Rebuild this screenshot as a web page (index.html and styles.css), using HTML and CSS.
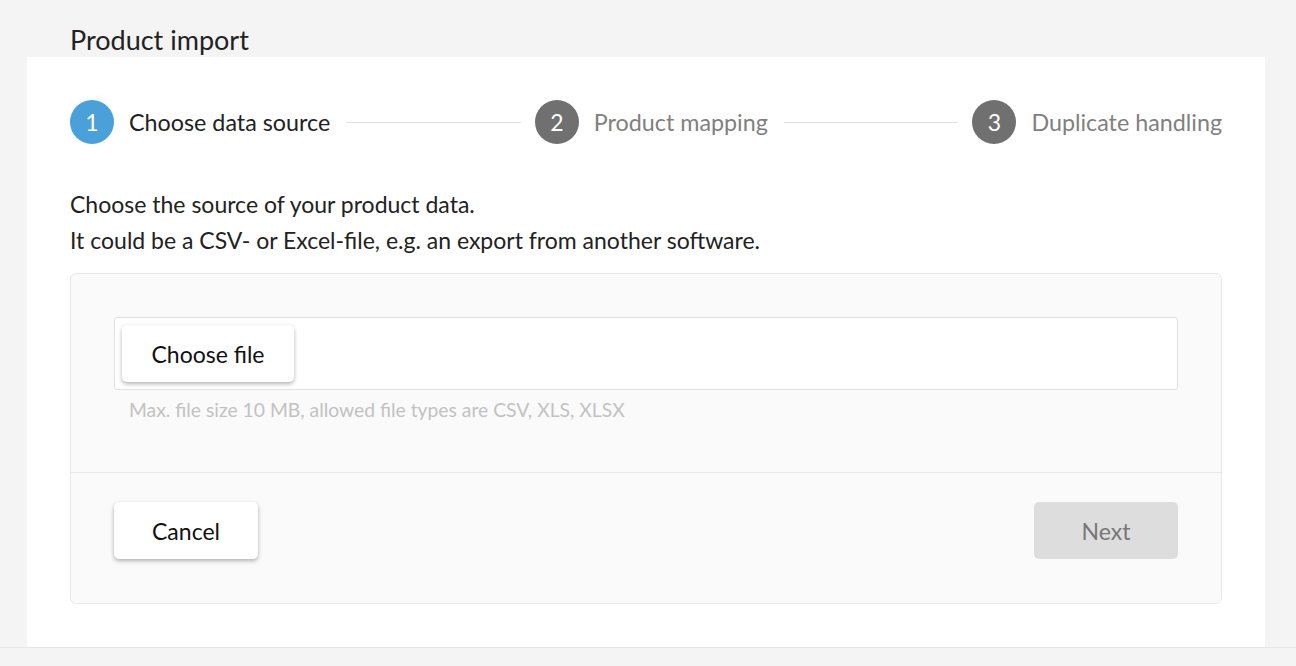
FILE: index.html
```html
<!DOCTYPE html>
<html lang="en">
<head>
<meta charset="utf-8">
<title>Product import</title>
<link rel="stylesheet" href="styles.css">
</head>
<body>
<div class="page">
  <h1 class="page-title">Product import</h1>
  <main class="panel">
    <div class="stepper">
      <div class="step active">
        <span class="step-num">1</span>
        <span class="step-label">Choose data source</span>
      </div>
      <div class="step-line"></div>
      <div class="step">
        <span class="step-num">2</span>
        <span class="step-label">Product mapping</span>
      </div>
      <div class="step-line"></div>
      <div class="step">
        <span class="step-num">3</span>
        <span class="step-label">Duplicate handling</span>
      </div>
    </div>
    <p class="intro">Choose the source of your product data.<br>It could be a CSV- or Excel-file, e.g. an export from another software.</p>
    <section class="box">
      <div class="box-body">
        <div class="file-input">
          <button class="btn" type="button">Choose file</button>
        </div>
        <div class="hint">Max. file size 10 MB, allowed file types are CSV, XLS, XLSX</div>
      </div>
      <div class="box-footer">
        <button class="btn btn-cancel" type="button">Cancel</button>
        <button class="btn btn-next" type="button" disabled>Next</button>
      </div>
    </section>
  </main>
  <div class="page-bottom"></div>
</div>
</body>
</html>
```
FILE: styles.css
```css
* { box-sizing: border-box; }
html, body {
  margin: 0;
  padding: 0;
  background: #f4f4f4;
  font-family: Lato, "Open Sans", "Liberation Sans", sans-serif;
  color: #222;
}
.page {
  width: 1296px;
  height: 666px;
  overflow: hidden;
}
.page-title {
  margin: 0;
  height: 57px;
  padding: 24px 0 0 70px;
  font-size: 27px;
  line-height: 32px;
  font-weight: 400;
  color: #222;
}
.panel {
  margin-left: 27px;
  width: 1238px;
  height: 590px;
  background: #fff;
  padding: 43px 43px 0 43px;
}
.stepper {
  display: flex;
  align-items: center;
  height: 44px;
}
.step {
  display: flex;
  align-items: center;
  gap: 15px;
  flex: none;
}
.step-num {
  width: 44px;
  height: 44px;
  border-radius: 50%;
  background: #707070;
  color: #fff;
  font-size: 23px;
  display: flex;
  align-items: center;
  justify-content: center;
}
.step.active .step-num { background: #4aa0d9; }
.step-label {
  font-size: 23.3px;
  color: #808080;
}
.step.active .step-label { color: #222; }
.step-line {
  flex: 1;
  height: 1px;
  background: #e0e0e0;
  margin: 0 14px 0 16px;
}
.intro {
  margin: 42px 0 0 0;
  font-size: 23px;
  line-height: 36px;
  color: #222;
}
.box {
  margin-top: 15px;
  border: 1px solid #e8e8e8;
  border-radius: 6px;
  background: #fafafa;
}
.box-body {
  padding: 43px 43px 0 43px;
  height: 199px;
  border-bottom: 1px solid #e8e8e8;
}
.file-input {
  height: 73px;
  border: 1px solid #e0e0e0;
  border-radius: 3px;
  background: #fff;
  padding: 7px;
}
.hint {
  margin: 7px 0 0 15px;
  font-size: 19.3px;
  line-height: 26px;
  color: #c2c2c2;
}
.btn {
  font-family: inherit;
  font-size: 23px;
  color: #111;
  background: #fff;
  border: none;
  border-radius: 5px;
  height: 57px;
  width: 172px;
  box-shadow: 0 2px 4px rgba(0, 0, 0, 0.3);
  cursor: pointer;
}
.box-footer {
  display: flex;
  justify-content: space-between;
  padding: 29px 43px 44px 43px;
}
.btn-cancel { width: 144px; }
.btn-next {
  width: 144px;
  background: #dddddd;
  color: #777;
  box-shadow: none;
  cursor: default;
}
.page-bottom {
  border-top: 1px solid #e6e6e6;
  height: 19px;
  background: #f4f4f4;
}
```
